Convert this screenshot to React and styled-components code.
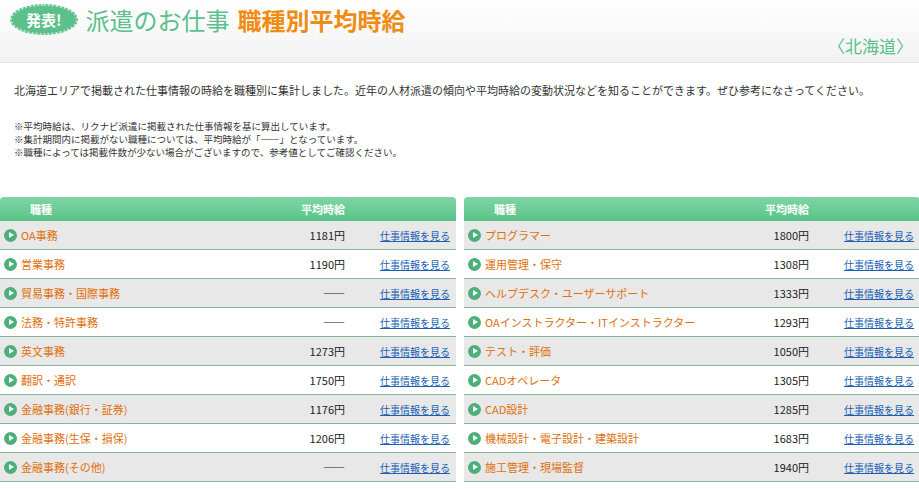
import React from 'react';
import styled, { createGlobalStyle } from 'styled-components';

const Global = createGlobalStyle`
  body { margin: 0; background: #fff; font-family: "Noto Sans CJK JP", "Liberation Sans", sans-serif; }
`;

const Header = styled.div`
  height: 62px;
  background: linear-gradient(#ffffff, #f2f2f2);
  border-bottom: 1px solid #e4e4e4;
  position: relative;
`;
const TitleRow = styled.div`
  display: flex;
  align-items: center;
  padding: 4px 0 0 10px;
  gap: 8px;
`;
const Badge = styled.span`
  background: #5cc08a;
  color: #fff;
  font-weight: bold;
  font-size: 15px;
  border-radius: 50%;
  padding: 3px 14px;
  border: 2px dotted #bfe6cf;
`;
const TitleGreen = styled.span`
  color: #5cbf8e;
  font-size: 24px;
  line-height: 30px;
`;
const TitleOrange = styled.span`
  color: #f08c14;
  font-size: 24px;
  font-weight: bold;
  line-height: 30px;
`;
const Area = styled.div`
  position: absolute;
  right: 6px;
  bottom: 4px;
  color: #5cbf8e;
  font-size: 17px;
`;
const Lead = styled.p`
  font-size: 11px;
  color: #333;
  margin: 19px 0 0 14px;
`;
const Notes = styled.div`
  font-size: 9.5px;
  color: #333;
  margin: 22px 0 0 14px;
  line-height: 13px;
`;
const Tables = styled.div`
  display: grid;
  grid-template-columns: 456px 456px;
  gap: 8px;
  margin-top: 38px;
`;
const Table = styled.div``;
const Head = styled.div`
  display: grid;
  grid-template-columns: 1fr 100px 111px;
  height: 24px;
  align-items: center;
  background: linear-gradient(#7fd5a6, #5ac488);
  border-radius: 4px 4px 0 0;
  color: #fff;
  font-weight: bold;
  font-size: 11px;
  padding-left: 30px;
  & > span:nth-child(2) { text-align: right; }
`;
const Row = styled.div`
  display: grid;
  grid-template-columns: 1fr 100px 111px;
  height: 28px;
  align-items: center;
  background: ${p => (p.$gray ? '#e8e8e8' : '#fff')};
  border-bottom: 1px solid #7fb89a;
  font-size: 11px;
`;
const Name = styled.span`
  display: flex;
  align-items: center;
  gap: 4px;
  color: #e0700c;
  padding-left: 4px;
`;
const Dot = styled.span`
  width: 13px;
  height: 13px;
  border-radius: 50%;
  background: #4db07a;
  position: relative;
  &::after {
    content: '';
    position: absolute;
    left: 5px;
    top: 3.5px;
    border-left: 5px solid #fff;
    border-top: 3px solid transparent;
    border-bottom: 3px solid transparent;
  }
`;
const Wage = styled.span`
  text-align: right;
  color: #222;
`;
const Link = styled.a`
  color: #1a5fb4;
  text-decoration: underline;
  font-size: 10px;
  text-align: right;
  padding-right: 6px;
`;

const left = [
  ['OA事務', '1181円'], ['営業事務', '1190円'], ['貿易事務・国際事務', '――'],
  ['法務・特許事務', '――'], ['英文事務', '1273円'], ['翻訳・通訳', '1750円'],
  ['金融事務(銀行・証券)', '1176円'], ['金融事務(生保・損保)', '1206円'], ['金融事務(その他)', '――'],
];
const right = [
  ['プログラマー', '1800円'], ['運用管理・保守', '1308円'], ['ヘルプデスク・ユーザーサポート', '1333円'],
  ['OAインストラクター・ITインストラクター', '1293円'], ['テスト・評価', '1050円'], ['CADオペレータ', '1305円'],
  ['CAD設計', '1285円'], ['機械設計・電子設計・建築設計', '1683円'], ['施工管理・現場監督', '1940円'],
];

const JobTable = ({ rows }) => (
  <Table>
    <Head><span>職種</span><span>平均時給</span><span /></Head>
    {rows.map(([n, w], i) => (
      <Row key={n} $gray={i % 2 === 0}>
        <Name><Dot />{n}</Name>
        <Wage>{w}</Wage>
        <Link href="#">仕事情報を見る</Link>
      </Row>
    ))}
  </Table>
);

export default function App() {
  return (
    <>
      <Global />
      <Header>
        <TitleRow>
          <Badge>発表!</Badge>
          <TitleGreen>派遣のお仕事</TitleGreen>
          <TitleOrange>職種別平均時給</TitleOrange>
        </TitleRow>
        <Area>〈北海道〉</Area>
      </Header>
      <Lead>北海道エリアで掲載された仕事情報の時給を職種別に集計しました。近年の人材派遣の傾向や平均時給の変動状況などを知ることができます。ぜひ参考になさってください。</Lead>
      <Notes>
        <div>※平均時給は、リクナビ派遣に掲載された仕事情報を基に算出しています。</div>
        <div>※集計期間内に掲載がない職種については、平均時給が「――」となっています。</div>
        <div>※職種によっては掲載件数が少ない場合がございますので、参考値としてご確認ください。</div>
      </Notes>
      <Tables>
        <JobTable rows={left} />
        <JobTable rows={right} />
      </Tables>
    </>
  );
}
